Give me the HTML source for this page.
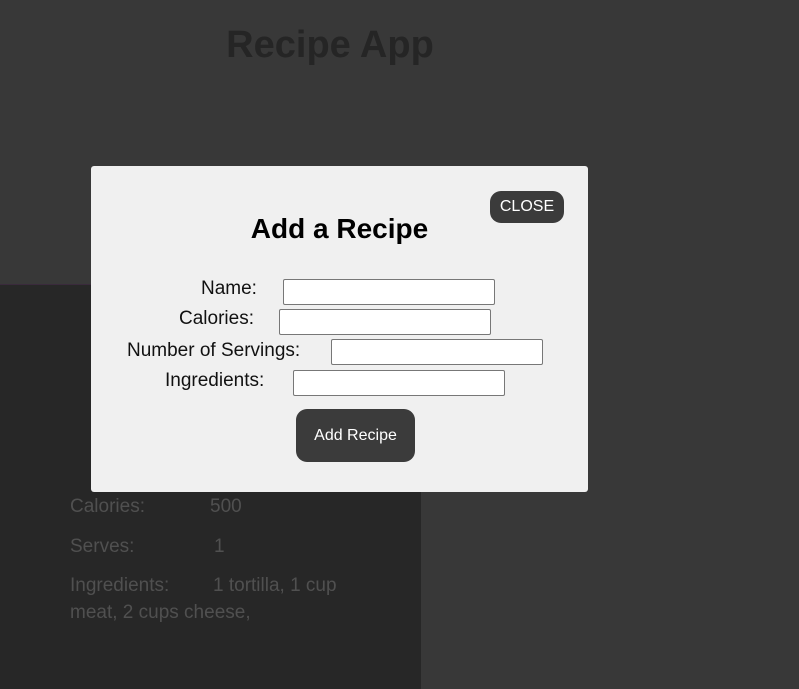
<!DOCTYPE html>
<html><head><meta charset="utf-8"><style>
*{margin:0;padding:0;box-sizing:border-box}
body{width:799px;height:689px;background:#383838;position:relative;overflow:hidden;font-family:"Liberation Sans",sans-serif}
.t{position:absolute;white-space:nowrap}
h1{position:absolute;left:0;width:660px;text-align:center;top:24px;font-size:38px;color:#252525;font-weight:bold}
.card{position:absolute;left:0;top:284px;width:421px;height:405px;background:#272727;border-top:1px solid #3a2a3c}
.g{color:#505050;font-size:19px}
.modal{position:absolute;left:91px;top:166px;width:497px;height:326px;background:#f0f0f0;border-radius:3px}
.close{position:absolute;left:399px;top:25px;width:74px;height:32px;background:#3b3b3b;color:#fff;border-radius:11px;font-size:16px;text-align:center;line-height:32px}
.mh{position:absolute;left:0;width:497px;text-align:center;top:47px;font-size:28px;font-weight:bold;color:#000}
.l{position:absolute;font-size:19px;color:#111}
.in{position:absolute;width:212px;height:26px;background:#fff;border:1px solid #777;border-radius:2px}
.btn{position:absolute;left:205px;top:243px;width:119px;height:53px;background:#3b3b3b;color:#fff;border-radius:11px;font-size:16px;text-align:center;line-height:53px}
</style></head><body>
<h1>Recipe App</h1>
<div class="card"></div>
<div class="t g" style="left:70px;top:496px">Calories:</div>
<div class="t g" style="left:210px;top:496px">500</div>
<div class="t g" style="left:70px;top:536px">Serves:</div>
<div class="t g" style="left:214px;top:536px">1</div>
<div class="t g" style="left:70px;top:575px">Ingredients:</div>
<div class="t g" style="left:213px;top:575px">1 tortilla, 1 cup</div>
<div class="t g" style="left:70px;top:602px">meat, 2 cups cheese,</div>
<div class="modal">
<div class="close">CLOSE</div>
<div class="mh">Add a Recipe</div>
<div class="t l" style="left:110px;top:112px">Name:</div>
<div class="in" style="left:192px;top:113px"></div>
<div class="t l" style="left:88px;top:142px">Calories:</div>
<div class="in" style="left:188px;top:143px"></div>
<div class="t l" style="left:36px;top:174px">Number of Servings:</div>
<div class="in" style="left:240px;top:173px"></div>
<div class="t l" style="left:74px;top:204px">Ingredients:</div>
<div class="in" style="left:202px;top:204px"></div>
<div class="btn">Add Recipe</div>
</div>
</body></html>
